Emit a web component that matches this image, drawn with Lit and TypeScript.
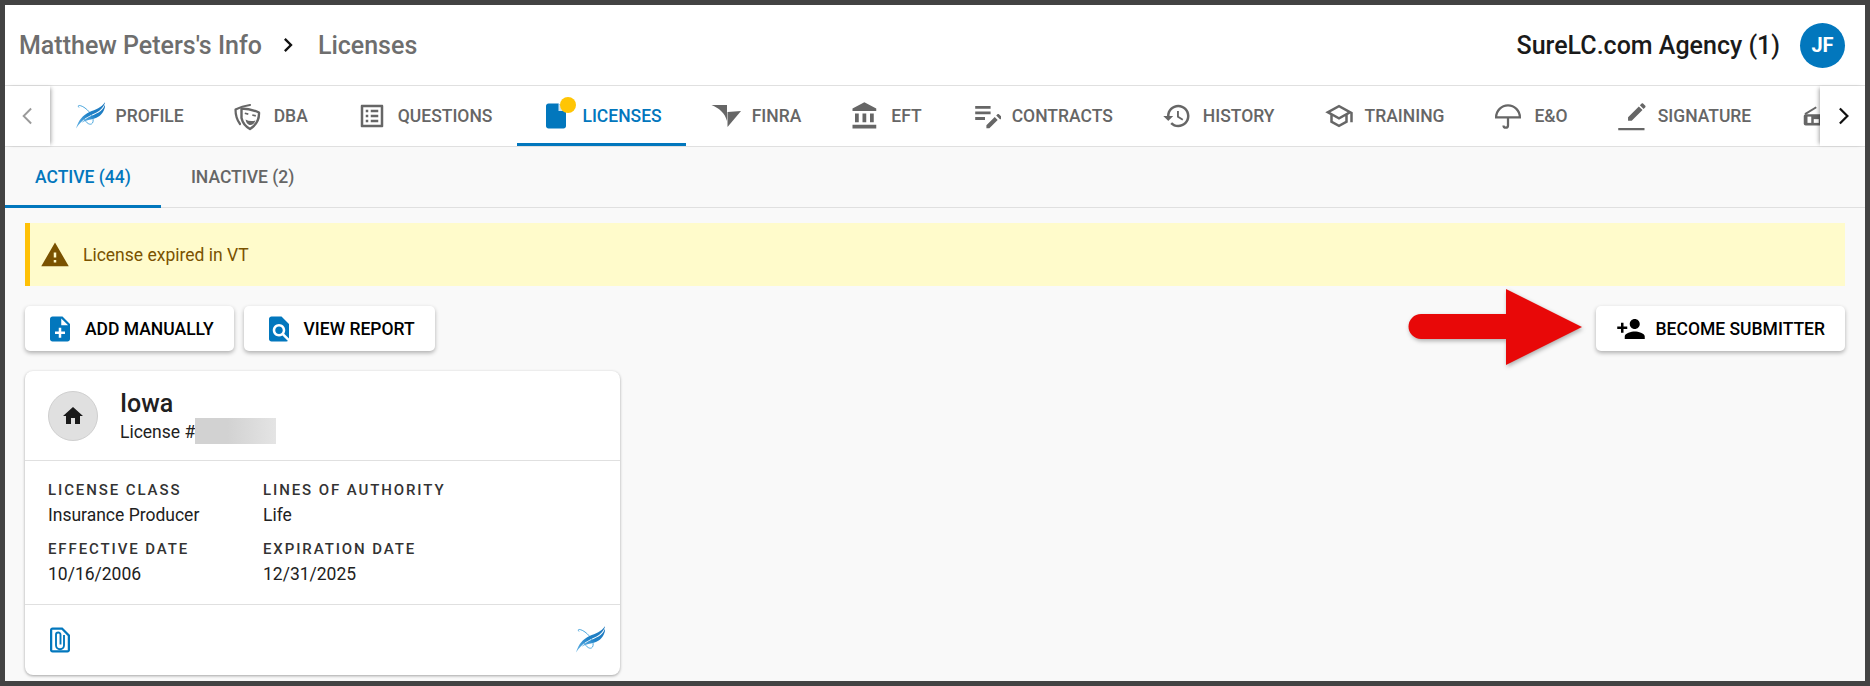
import { LitElement, html, css, svg } from "lit";
import { customElement } from "lit/decorators.js";

const logo = svg`<defs><linearGradient id="lg" x1="0" y1="1" x2="1" y2="0"><stop offset="0" stop-color="#6cb8e8"/><stop offset=".45" stop-color="#1f82c8"/><stop offset="1" stop-color="#1f78bd"/></linearGradient></defs>
<path d="M4 6.500 C1.500 3.500 6 4 10 7 C15 10.500 20 18 17.500 22 C15.500 25 11 22 9.500 18" fill="none" stroke="#4ea8de" stroke-width="1"/>
<path d="M1 27.500 C3.500 19 8 14 14.500 11 C21 8.500 27 6.500 30.500 .5 C29 5.500 26 9 21.500 11.500 C14.500 14.500 7 18 1 27.500Z" fill="url(#lg)"/>
<path d="M6.500 22 C10.500 16.500 18 14.500 23.500 11.500 C27 9.500 29 6.500 30.500 2.500 C30 10 26 15.500 19.500 17.500 C14.500 19 10.500 19 6.500 22Z" fill="url(#lg)"/>`;

const P = (d: string) => svg`<path d="${d}"/>`;
const icons: Record<string, any> = {
  logo,
  dba: svg`<g fill="none" stroke="currentColor" stroke-linejoin="round" stroke-linecap="round"><path d="M17 4 Q9 5 2.500 8.500 Q2.500 17 7 23" stroke-width="2.200"/><path d="M8.500 7.500 Q17 7.500 26 11.500 Q26.500 22 17 28 Q10 24 8.500 17Z" stroke-width="2.400"/></g><path d="M12 11.500l3.500.8-.4 1.600-3.500-.8zM19.500 13.200l3.500.9-.4 1.600-3.500-.9zM12.500 18.500 Q17 21 22.500 19.500 Q20.500 24.500 16.500 24 Q13.500 23 12.500 18.500Z" fill="currentColor"/>`,
  questions: P("M19 5v14H5V5h14m1.100-2H3.900c-.5 0-.9.4-.9.9v16.200c0 .4.4.9.9.9h16.200c.4 0 .9-.5.9-.9V3.900c0-.5-.5-.9-.9-.9zM11 7h6v2h-6V7zm0 4h6v2h-6v-2zm0 4h6v2h-6zM7 7h2v2H7zm0 4h2v2H7zm0 4h2v2H7z"),
  license: svg`<path d="M14 2H6c-1.100 0-2 .9-2 2v16c0 1.100.9 2 2 2h12c1.100 0 2-.9 2-2V8z"/><path d="M14 2v6h6z" fill="#cfe4f2"/>`,
  eft: P("M4 10v7h3v-7H4zm6 0v7h3v-7h-3zM2 22h19v-3H2v3zm14-12v7h3v-7h-3zm-4.500-9L2 6v2h19V6l-9.500-5z"),
  contracts: svg`<g transform="translate(0 -2.800) scale(1.120)"><path d="M3 10h11v2H3v-2zm0-2h11V6H3v2zm0 8h7v-2H3v2zm15.010-3.130l.71-.71c.39-.39 1.020-.39 1.410 0l1.410 1.410c.39.39.39 1.020 0 1.410l-.71.71-2.820-2.820zm-1.060 1.060L11 19.880V22h2.120l5.940-5.940-2.110-2.130z"/></g>`,
  history: P("M13 3c-4.970 0-9 4.030-9 9H1l3.890 3.890.07.14L9 12H6c0-3.870 3.130-7 7-7s7 3.130 7 7-3.130 7-7 7c-1.930 0-3.680-.79-4.940-2.060l-1.420 1.420C8.270 19.990 10.510 21 13 21c4.970 0 9-4.030 9-9s-4.030-9-9-9zm-1 5v5l4.280 2.540.72-1.210-3.500-2.080V8H12z"),
  training: P("M12 3L1 9l4 2.180v6L12 21l7-3.820v-6l2-1.090V17h2V9L12 3zm6.820 6L12 12.720 5.180 9 12 5.280 18.820 9zM17 15.990l-5 2.730-5-2.730v-3.720L12 15l5-2.730v3.720z"),
  eo: svg`<path d="M2.500 13a9.500 9.500 0 0 1 19 0zM12 13v6.500a1.800 1.800 0 0 1-3.600 0" fill="none" stroke="currentColor" stroke-width="1.800"/>`,
  signature: svg`<rect x="1" y="21.600" width="21" height="1.800"/><g transform="translate(6.500 -.5) scale(.78)"><path d="M3 17.250V21h3.750L17.810 9.940l-3.750-3.750L3 17.250zM20.710 7.040c.39-.39.39-1.020 0-1.410l-2.340-2.340c-.39-.39-1.020-.39-1.410 0l-1.830 1.830 3.750 3.750 1.830-1.830z"/></g>`,
  last: svg`<rect x="3" y="10.500" width="18" height="9" rx="1.500"/><rect x="6" y="12.500" width="3" height="5" fill="#fff"/><rect x="11" y="14.500" width="4" height="3" fill="#fff"/><path d="M4 10.500 L13 5" stroke="currentColor" stroke-width="1.600"/>`,
  warn: P("M1 21h22L12 2 1 21zm12-3h-2v-2h2v2zm0-4h-2v-4h2v4z"),
  add: P("M14 2H6c-1.100 0-1.990.9-1.990 2L4 20c0 1.100.89 2 1.990 2H18c1.100 0 2-.9 2-2V8l-6-6zm2 14h-3v3h-2v-3H8v-2h3v-3h2v3h3v2zm-3-7V3.500L18.500 9H13z"),
  find: P("M20 19.590V8l-6-6H6c-1.100 0-1.990.9-1.990 2L4 20c0 1.100.89 2 1.990 2H18c.45 0 .85-.15 1.190-.4l-4.430-4.430c-.8.52-1.740.83-2.760.83-2.760 0-5-2.240-5-5s2.240-5 5-5 5 2.240 5 5c0 1.020-.31 1.960-.83 2.750L20 19.590zM9 13c0 1.660 1.340 3 3 3s3-1.340 3-3-1.340-3-3-3-3 1.340-3 3z"),
  person: P("M15 12c2.210 0 4-1.790 4-4s-1.790-4-4-4-4 1.790-4 4 1.790 4 4 4zm-9-2V7H4v3H1v2h3v3h2v-3h3v-2H6zm9 4c-2.670 0-8 1.340-8 4v2h16v-2c0-2.660-5.330-4-8-4z"),
  home: P("M10 20v-6h4v6h5v-8h3L12 3 2 12h3v8z"),
  clip: svg`<path d="M14 2H6c-1.100 0-2 .9-2 2v16c0 1.100.9 2 2 2h12c1.100 0 2-.9 2-2V8z"/><path d="M5.800 3.800h7.500L18.200 8.700V20.200H5.800z" fill="#fff"/><path d="M15.200 8v8.200a3.200 3.200 0 0 1-6.400 0V7.800a1.800 1.800 0 0 1 3.600 0V15.500" fill="none" stroke="currentColor" stroke-width="1.500"/>`,
};
const ic = (n: string, cls = "") => {
  const vb = n === "logo" || n === "dba" ? "0 0 30 30" : "0 0 24 24";
  return html`<svg class="ic ${cls}" viewBox="${vb}" fill="currentColor">${icons[n]}</svg>`;
};

const finra = svg`<path d="M.5 4H16V20C14 12 8 7 .5 4Z"/><path d="M16.500 11L30 10 16.500 26Z"/>`;

const tabs: [string, string][] = [
  ["logo", "PROFILE"], ["dba", "DBA"], ["questions", "QUESTIONS"], ["license", "LICENSES"], ["finra", "FINRA"],
  ["eft", "EFT"], ["contracts", "CONTRACTS"], ["history", "HISTORY"], ["training", "TRAINING"], ["eo", "E&O"], ["signature", "SIGNATURE"], ["last", ""],
];

@customElement("app-root")
export class AppRoot extends LitElement {
  static styles = css`
    :host { display: block; width: 1870px; height: 686px; box-sizing: border-box; border: 5px solid #434343; background: #f9f9f9;
      font-family: Roboto, "Liberation Sans", sans-serif; overflow: hidden; position: relative; color: #212121; }
    .ic { width: 30px; height: 30px; flex: none; display: block; }
    .head { height: 80px; background: #fff; display: flex; align-items: center; padding: 0 20px 0 14px; border-bottom: 1px solid #e0e0e0; box-sizing: content-box; }
    .crumb { font-size: 25px; font-weight: 500; color: #6e6e6e; }
    .chev { width: 28px; height: 28px; margin: 0 16px 0 12px; color: #111; flex: none; }
    .agency { margin-left: auto; font-size: 25px; font-weight: 500; color: #1a1a1a; }
    .av { width: 45px; height: 45px; border-radius: 50%; background: #0277bd; color: #fff; font-size: 20px; font-weight: 700; display: flex; align-items: center; justify-content: center; margin-left: 20px; }
    .tabs { height: 60px; background: #fff; display: flex; border-bottom: 1px solid #e0e0e0; box-sizing: content-box; }
    .nav { width: 45px; flex: none; display: flex; align-items: center; justify-content: center; background: #fff; position: relative; z-index: 1; }
    .nav svg { width: 30px; height: 30px; }
    .nav.prev { color: #9a9a9a; box-shadow: 3px 0 4px -2px rgba(0,0,0,.35); }
    .nav.next { color: #111; box-shadow: -3px 0 4px -2px rgba(0,0,0,.35); }
    .scroll { flex: 1; display: flex; overflow: hidden; min-width: 0; }
    .tab { flex: none; height: 60px; box-sizing: border-box; display: flex; align-items: center; padding: 0 24.500px; color: #666; font-size: 17.5px; font-weight: 500; position: relative; }
    .tab .ic { margin-right: 11px; }
    .tab.on { color: #0277bd; }
    .tab.on::after { content: ""; position: absolute; left: 0; right: 0; bottom: 0; height: 3px; background: #0277bd; }
    .tab .dot { position: absolute; left: 43px; top: 11px; width: 16px; height: 16px; border-radius: 50%; background: #ffc505; }
    .subs { height: 60px; display: flex; border-bottom: 1px solid #e0e0e0; box-sizing: content-box; }
    .sub { padding: 0 30px; display: flex; align-items: center; font-size: 17.5px; font-weight: 500; color: #666; position: relative; }
    .sub.on { color: #0277bd; }
    .sub.on::after { content: ""; position: absolute; left: 0; right: 0; bottom: -1px; height: 3px; background: #0277bd; }
    .body { padding: 15px 20px 0; display: flex; flex-direction: column; }
    .alert { height: 63px; box-sizing: border-box; background: #fffbcb; border-left: 5px solid #ffc107; display: flex; align-items: center; padding-left: 10px; gap: 13px; color: #7a5200; font-size: 17.5px; }
    .actions { display: flex; gap: 10px; margin-top: 20px; }
    .btn { height: 45px; box-sizing: border-box; display: flex; align-items: center; gap: 10px; padding: 0 20px; background: #fff; border-radius: 5px; color: #000; font-size: 17.5px; font-weight: 500; box-shadow: 0 2px 4px rgba(0,0,0,.3); }
    .btn .ic { color: #0277bd; }
    .btn.right { margin-left: auto; }
    .btn.right .ic { color: #000; }
    .arrow { position: absolute; left: 1403px; top: 284px; width: 175px; height: 76px; filter: drop-shadow(1px 2px 2px rgba(0,0,0,.3)); }
    .card { width: 595px; height: 304px; margin-top: 20px; background: #fff; border-radius: 8px; box-shadow: 0 1px 3px rgba(0,0,0,.35); display: flex; flex-direction: column; }
    .ctop { height: 89px; display: flex; align-items: center; gap: 22px; padding-left: 23px; border-bottom: 1px solid #e0e0e0; }
    .who { padding-top: 2px; }
    .round { width: 50px; height: 50px; box-sizing: border-box; border-radius: 50%; background: #e0e0e0; border: 1px solid #cfcfcf; display: flex; align-items: center; justify-content: center; color: #1a1a1a; }
    .round svg { width: 24px; height: 24px; }
    .name { font-size: 25px; font-weight: 500; line-height: 30px; }
    .lic { font-size: 17.5px; line-height: 26px; display: flex; }
    .blur { width: 81px; height: 26px; margin-top: -1px; background: linear-gradient(90deg, #d2d2d2 40%, #e4e4e4); }
    .grid { height: 144px; box-sizing: border-box; border-bottom: 1px solid #e0e0e0; padding: 20px 23px 0; display: grid; grid-template-columns: 215px 1fr; grid-auto-rows: 59px; }
    .lab { font-size: 15px; font-weight: 500; letter-spacing: 1.900px; line-height: 18px; color: #333; }
    .val { font-size: 17.5px; line-height: 24px; margin-top: 4px; }
    .cfoot { flex: 1; display: flex; align-items: center; justify-content: space-between; padding: 0 15px 0 20px; }
    .cfoot .clip { color: #0277bd; }
  `;
  render() {
    return html`
      <div class="head">
        <span class="crumb">Matthew Peters's Info</span>
        <svg class="chev" viewBox="0 0 24 24" fill="currentColor"><path d="M10 6L8.590 7.410 13.170 12l-4.580 4.590L10 18l6-6z"/></svg>
        <span class="crumb">Licenses</span>
        <span class="agency">SureLC.com Agency (1)</span>
        <div class="av">JF</div>
      </div>
      <div class="tabs">
        <div class="nav prev"><svg viewBox="0 0 24 24" fill="none" stroke="currentColor" stroke-width="1.500"><path d="M14.500 6L8.500 12l6 6"/></svg></div>
        <div class="scroll">
          ${tabs.map(([i, t]) => html`<div class="tab ${i === "license" ? "on" : ""}">
            ${i === "finra" ? html`<svg class="ic" viewBox="0 0 30 30" fill="currentColor">${finra}</svg>` : ic(i)}
            ${i === "license" ? html`<span class="dot"></span>` : ""}${t}</div>`)}
        </div>
        <div class="nav next"><svg viewBox="0 0 24 24" fill="none" stroke="currentColor" stroke-width="1.800"><path d="M9.500 6l6 6-6 6"/></svg></div>
      </div>
      <div class="subs"><div class="sub on">ACTIVE (44)</div><div class="sub">INACTIVE (2)</div></div>
      <div class="body">
        <div class="alert">${ic("warn")}<span>License expired in VT</span></div>
        <div class="actions">
          <div class="btn">${ic("add")}ADD MANUALLY</div>
          <div class="btn">${ic("find")}VIEW REPORT</div>
          <div class="btn right">${ic("person")}BECOME SUBMITTER</div>
        </div>
        <div class="card">
          <div class="ctop">
            <div class="round">${ic("home")}</div>
            <div class="who"><div class="name">Iowa</div><div class="lic">License #<span class="blur"></span></div></div>
          </div>
          <div class="grid">
            <div><div class="lab">LICENSE CLASS</div><div class="val">Insurance Producer</div></div>
            <div><div class="lab">LINES OF AUTHORITY</div><div class="val">Life</div></div>
            <div><div class="lab">EFFECTIVE DATE</div><div class="val">10/16/2006</div></div>
            <div><div class="lab">EXPIRATION DATE</div><div class="val">12/31/2025</div></div>
          </div>
          <div class="cfoot">${ic("clip", "clip")}${ic("logo")}</div>
        </div>
      </div>
      <svg class="arrow" viewBox="0 0 175 76" fill="#e80808"><path d="M98 0 L174 38 L98 76 V50 H13 A12.500 12.500 0 0 1 13 25 H98Z"/></svg>
    `;
  }
}
